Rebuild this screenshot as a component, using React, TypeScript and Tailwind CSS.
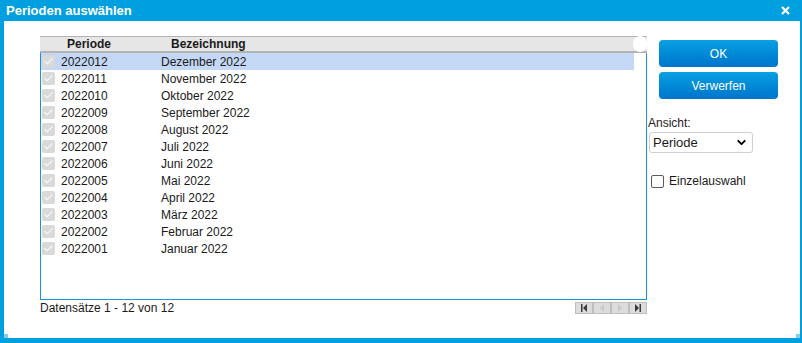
import { Check, ChevronDown } from 'lucide-react'

const periods = [
  ['2022012', 'Dezember 2022'],
  ['2022011', 'November 2022'],
  ['2022010', 'Oktober 2022'],
  ['2022009', 'September 2022'],
  ['2022008', 'August 2022'],
  ['2022007', 'Juli 2022'],
  ['2022006', 'Juni 2022'],
  ['2022005', 'Mai 2022'],
  ['2022004', 'April 2022'],
  ['2022003', 'März 2022'],
  ['2022002', 'Februar 2022'],
  ['2022001', 'Januar 2022'],
]

function RowCheck() {
  return (
    <span className="flex h-[13px] w-[13px] items-center justify-center rounded-[2px] bg-[#d9d9d9]">
      <Check size={11} strokeWidth={3} className="text-[#f4f4f4]" />
    </span>
  )
}

function PagerButton({ kind, disabled }: { kind: 'first' | 'prev' | 'next' | 'last'; disabled?: boolean }) {
  const fill = disabled ? '#c8c8c8' : '#3a3a3a'
  return (
    <span className="flex h-[12px] w-[18px] items-center justify-center border border-[#bdbdbd] bg-[#dcdcdc]">
      <svg width="8" height="8" viewBox="0 0 8 8">
        {kind === 'first' && (
          <>
            <rect x="1" y="0" width="1.5" height="8" fill={fill} />
            <polygon points="7,0 7,8 3,4" fill={fill} />
          </>
        )}
        {kind === 'prev' && <polygon points="6,0 6,8 2,4" fill={fill} />}
        {kind === 'next' && <polygon points="2,0 2,8 6,4" fill={fill} />}
        {kind === 'last' && (
          <>
            <polygon points="1,0 1,8 5,4" fill={fill} />
            <rect x="5.5" y="0" width="1.5" height="8" fill={fill} />
          </>
        )}
      </svg>
    </span>
  )
}

export default function App() {
  return (
    <div
      className="flex h-[343px] w-[802px] flex-col bg-[#009fe0] text-[12px] text-[#1a1a1a]"
      style={{ fontFamily: '"Liberation Sans", Arial, sans-serif' }}
    >
      <div className="flex h-[21px] items-center justify-between pl-[6px] pr-[12px]">
        <span className="text-[13px] font-bold text-white">Perioden auswählen</span>
        <svg width="9" height="9" viewBox="0 0 9 9">
          <path d="M1 1 L8 8 M8 1 L1 8" stroke="white" strokeWidth="2.2" />
        </svg>
      </div>

      <div className="relative mb-[5px] ml-[4px] mr-[2px] flex flex-1 bg-white pl-[36px] pt-[15px]">
        <div className="flex w-[607px] flex-col">
          <div className="flex h-[264px] flex-col">
            <div className="relative flex h-[17px] items-center border-t border-b-2 border-[#b3b3b3] bg-[#e6e6e6] font-bold">
              <span className="ml-[27px] w-[104px]">Periode</span>
              <span>Bezeichnung</span>
              <span className="absolute right-0 top-[-1px] h-[16px] w-[14px] rounded-full bg-white" />
            </div>
            <div className="flex-1 border border-t-0 border-[#1b93db] pr-[12px]">
              {periods.map(([code, name], i) => (
                <div
                  key={code}
                  className={`flex h-[17px] items-center ${i === 0 ? 'bg-[#c4d8f5]' : ''}`}
                >
                  <span className="ml-[1px] w-[19px]">
                    <RowCheck />
                  </span>
                  <span className="w-[100px]">{code}</span>
                  <span>{name}</span>
                </div>
              ))}
            </div>
          </div>
          <div className="flex items-start justify-between">
            <span className="leading-[16px]">Datensätze 1 - 12 von 12</span>
            <div className="mt-[2px] flex">
              <PagerButton kind="first" />
              <PagerButton kind="prev" disabled />
              <PagerButton kind="next" disabled />
              <PagerButton kind="last" />
            </div>
          </div>
        </div>

        <div className="ml-[1px] flex flex-col">
          <div className="ml-[11px] mt-[4px] flex flex-col gap-[5px]">
            <button className="h-[27px] w-[119px] rounded-[4px] bg-gradient-to-b from-[#0ba0e2] to-[#0074cc] text-[12px] text-white">
              OK
            </button>
            <button className="h-[27px] w-[119px] rounded-[4px] bg-gradient-to-b from-[#0ba0e2] to-[#0074cc] text-[12px] text-white">
              Verwerfen
            </button>
          </div>
          <span className="mt-[16px] leading-[16px] text-[#2a1a1a]">Ansicht:</span>
          <div className="ml-[1px] mt-[1px] flex h-[21px] w-[104px] items-center justify-between rounded-[3px] border border-[#cfcfcf] pl-[3px] pr-[4px] text-[13px]">
            <span>Periode</span>
            <ChevronDown size={13} strokeWidth={3.5} className="text-black" />
          </div>
          <label className="ml-[3px] mt-[20px] flex items-center gap-[5px] leading-[16px]">
            <span className="h-[13px] w-[13px] rounded-[2px] border border-[#5a5a5a]" />
            <span>Einzelauswahl</span>
          </label>
        </div>

        <span className="absolute bottom-0 left-0 h-[4px] w-[4px] bg-[#7fcff0]" />
        <span className="absolute bottom-0 right-0 h-[4px] w-[4px] bg-[#7fcff0]" />
      </div>
    </div>
  )
}
